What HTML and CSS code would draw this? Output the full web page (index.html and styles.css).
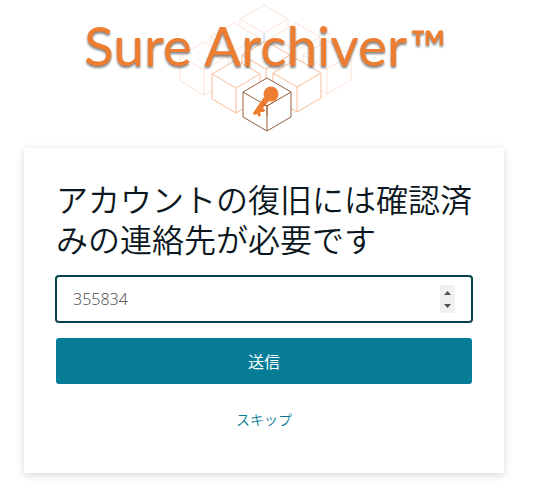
FILE: index.html
```html
<!DOCTYPE html>
<html lang="ja">
<head>
  <meta charset="UTF-8">
  <meta name="viewport" content="width=device-width, initial-scale=1.0">
  <title>Sure Archiver</title>
  <link rel="stylesheet" href="styles.css">
</head>
<body>
  <header>
    <svg class="logo" viewBox="24 0 480 148" role="img" aria-label="Sure Archiver™">
      <defs>
        <path id="cube" d="M0 0L24 14V39L0 53L-24 39V14ZM24 14L0 28L-24 14M0 28V53"/>
      </defs>
      <g class="cubes">
        <use href="#cube" class="far" x="264" y="5"/>
        <path class="edge" d="M264 33V43"/>
        <use href="#cube" class="far" x="234" y="23"/>
        <use href="#cube" class="far" x="296" y="23"/>
        <use href="#cube" class="far" x="204" y="42"/>
        <use href="#cube" class="far" x="327" y="41"/>
        <use href="#cube" class="mid" x="266" y="41"/>
        <use href="#cube" class="mid" x="236" y="60"/>
        <use href="#cube" class="mid" x="297" y="59"/>
        <use href="#cube" class="near" x="267" y="78"/>
      </g>
      <text class="brand" x="84" y="66">Sure Archiver</text>
      <text class="brand tm" x="410" y="65">™</text>
      <g class="key">
        <circle cx="271" cy="94" r="7.500"/>
        <path d="M264 97L269 101L263 108L265 110L264 112H261L260 113L261 115L259 117L257 114L254 115L253 113Z"/>
      </g>
      <path class="key-edge" d="M263 104L267 106L277 100M267 106V116"/>
    </svg>
  </header>
  <main class="card">
    <h1>アカウントの復旧には確認済みの連絡先が必要です</h1>
    <form>
      <input class="code" type="number" value="355834" aria-label="確認コード">
      <button class="submit" type="submit">送信</button>
    </form>
    <a class="skip" href="#">スキップ</a>
  </main>
</body>
</html>
```

FILE: styles.css
```css
* {
  box-sizing: border-box;
}
body {
  margin: 0;
  padding: 0 30px 16px 24px;
  background-color: #fff;
  color: #0b1720;
  font-family: "Open Sans", "Noto Sans CJK JP", sans-serif;
  font-weight: 300;
}
header,
.card {
  max-width: 480px;
  margin: 0 auto;
}
.logo {
  display: block;
  width: 100%;
}
.cubes {
  fill: #fff;
  stroke-width: 1;
}
.far {
  stroke: #fde3d6;
}
.mid {
  stroke: #f6bd98;
}
.near {
  stroke: #96603f;
}
.edge {
  stroke: #b9d7f2;
}
.brand {
  font-family: Lato, sans-serif;
  font-size: 55px;
  font-weight: 400;
  fill: #ed7d31;
  filter: drop-shadow(0 2px 1px rgba(0, 0, 0, 0.5));
}
.tm {
  font-size: 48px;
  font-weight: 600;
}
.key {
  fill: #ed7d31;
}
.key-edge {
  fill: none;
  stroke: #b5642f;
}
.card {
  padding: 32px 32px 41px;
  background-color: #fff;
  box-shadow: 0 2px 8px rgba(0, 30, 30, 0.16);
}
h1 {
  margin: 0 0 16px;
  font-size: 32px;
  font-weight: 350;
  line-height: 40px;
}
form {
  display: flex;
  flex-direction: column;
  gap: 16px;
}
.code {
  width: 100%;
  height: 46px;
  padding: 8px 16px;
  border: 1px solid #04404d;
  border-radius: 3px;
  outline: none;
  box-shadow: 0 0 0 1px #04404d;
  background-color: #fff;
  color: #444;
  font: inherit;
  font-size: 16px;
}
.code::-webkit-inner-spin-button {
  -webkit-appearance: none;
  width: 15px;
  height: 28px;
  opacity: 1;
  background: #f0f0f0 url("data:image/svg+xml,%3Csvg xmlns='http://www.w3.org/2000/svg' width='15' height='28' fill='%23505050'%3E%3Cpath d='M4 10L7.500 6L11 10ZM4 19H11L7.500 23Z'/%3E%3C/svg%3E") no-repeat;
}
.submit {
  height: 46px;
  border: none;
  border-radius: 3px;
  background-color: #067c96;
  color: #fff;
  font: inherit;
  font-size: 16px;
  font-weight: 400;
  cursor: pointer;
}
.skip {
  display: block;
  width: fit-content;
  margin: 24px auto 0;
  color: #067c96;
  font-size: 14px;
  font-weight: 350;
  line-height: 24px;
  text-decoration: none;
}
```
